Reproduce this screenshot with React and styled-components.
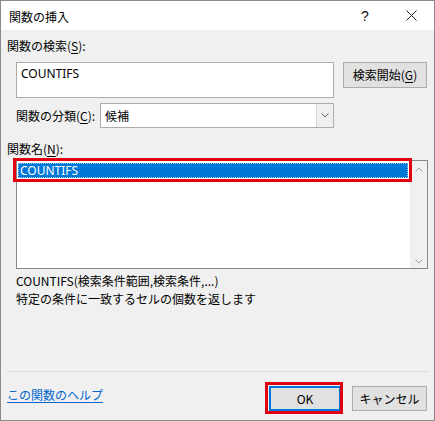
import React from "react";
import styled, { createGlobalStyle } from "styled-components";

const Global = createGlobalStyle`
  html, body { margin: 0; padding: 0; background: #fff; }
  * { box-sizing: border-box; }
  body { font-family: "Noto Sans CJK JP", "Noto Sans", sans-serif; font-size: 12px; color: #000; }
`;

const Window = styled.div`
  width: 435px;
  height: 421px;
  border: 1px solid #8a8a8a;
  background: #f0f0f0;
  display: flex;
  flex-direction: column;
  overflow: hidden;
`;

const TitleBar = styled.div`
  height: 29px;
  background: #fff;
  display: flex;
  align-items: center;
  padding-left: 8px;
  flex-shrink: 0;
`;

const Title = styled.div`
  flex: 1;
  font-size: 12px;
  line-height: 16px;
  padding-top: 2px;
`;

const TitleButton = styled.div`
  width: ${(p) => p.$w}px;
  height: 29px;
  display: flex;
  align-items: center;
  justify-content: center;
  font-family: "Liberation Sans", sans-serif;
  font-size: 14px;
  color: #111;
`;

const Body = styled.div`
  flex: 1;
  display: flex;
  flex-direction: column;
  padding: 0 6px;
`;

const Label = styled.div`
  line-height: 16px;
  margin-top: ${(p) => p.$mt || 0}px;
  margin-left: ${(p) => p.$ml || 0}px;
  width: ${(p) => (p.$w ? p.$w + "px" : "auto")};
  white-space: nowrap;
  flex-shrink: 0;
`;

const U = styled.span`
  text-decoration: underline;
  text-underline-offset: 2px;
`;

const SearchRow = styled.div`
  display: flex;
  align-items: flex-start;
  margin-top: 8px;
  padding-left: 9px;
`;

const TextArea = styled.div`
  width: 318px;
  height: 36px;
  background: #fff;
  border: 1px solid #adadad;
  padding: 3px 4px;
  line-height: 15px;
  font-family: "Noto Sans", "Noto Sans CJK JP", sans-serif;
`;

const Button = styled.div`
  width: ${(p) => p.$w}px;
  height: ${(p) => p.$h || 25}px;
  margin-left: ${(p) => p.$ml || 0}px;
  background: #e1e1e1;
  border: 1px solid ${(p) => (p.$default ? "#0078d7" : "#adadad")};
  box-shadow: ${(p) => (p.$default ? "inset 0 0 0 1px #0078d7" : "none")};
  display: flex;
  align-items: center;
  justify-content: center;
  white-space: nowrap;
  line-height: 16px;
  flex-shrink: 0;
`;

const CategoryRow = styled.div`
  display: flex;
  align-items: center;
  margin-top: 5px;
  padding-left: 9px;
`;

const Select = styled.div`
  width: 234px;
  height: 25px;
  background: #fff;
  border: 1px solid #adadad;
  display: flex;
  align-items: stretch;
`;

const SelectValue = styled.div`
  flex: 1;
  padding-left: 4px;
  display: flex;
  align-items: center;
`;

const SelectArrow = styled.div`
  width: 17px;
  border-left: 1px solid #d4d4d4;
  background: #f0f0f0;
  display: flex;
  align-items: center;
  justify-content: center;
`;

const ListWrap = styled.div`
  position: relative;
  margin-top: 3px;
  margin-left: 9px;
  width: 412px;
  height: 109px;
  background: #fff;
  border: 1px solid #828790;
  display: flex;
`;

const ListItems = styled.div`
  flex: 1;
  padding: 2px 0 0 1px;
`;

const ListItem = styled.div`
  height: 15px;
  width: 390px;
  background: #0078d7;
  color: #fff;
  outline: 1px dotted #9cc7ee;
  outline-offset: -1px;
  padding-left: 2px;
  line-height: 15px;
  font-family: "Noto Sans", "Noto Sans CJK JP", sans-serif;
`;

const Scrollbar = styled.div`
  width: 17px;
  background: #f0f0f0;
  display: flex;
  flex-direction: column;
  justify-content: space-between;
  align-items: center;
  padding: 6px 0 4px;
`;

const Highlight = styled.div`
  position: absolute;
  border: 3px solid #e0000f;
  pointer-events: none;
  left: ${(p) => p.$l}px;
  top: ${(p) => p.$t}px;
  width: ${(p) => p.$w}px;
  height: ${(p) => p.$h}px;
`;

const Description = styled.div`
  margin-top: 3px;
  margin-left: 9px;
  line-height: 18px;
`;

const Spacer = styled.div`
  flex: 1;
`;

const Separator = styled.div`
  height: 1px;
  background: #dcdcdc;
  margin: 0 0;
`;

const Footer = styled.div`
  height: 48px;
  display: flex;
  align-items: flex-start;
  padding: 14px 1px 0 0;
`;

const HelpLink = styled.a`
  color: #0066cc;
  text-decoration: underline;
  text-underline-offset: 2px;
  line-height: 16px;
  margin-top: 1px;
  flex: 1;
  cursor: pointer;
`;

const DefaultWrap = styled.div`
  position: relative;
`;

const Chevron = ({ up, color = "#a0a0a0" }) => (
  <svg width="8" height="5" viewBox="0 0 8 5">
    <path
      d={up ? "M0.5 4.5 L4 1 L7.5 4.5" : "M0.5 0.5 L4 4 L7.5 0.5"}
      fill="none"
      stroke={color}
      strokeWidth="1"
    />
  </svg>
);

export default function App() {
  return (
    <>
      <Global />
      <Window>
        <TitleBar>
          <Title>関数の挿入</Title>
          <TitleButton $w={46}>?</TitleButton>
          <TitleButton $w={46}>
            <svg width="11" height="11" viewBox="0 0 11 11">
              <path d="M0.5 0.5 L10.5 10.5 M10.5 0.5 L0.5 10.5" stroke="#222" strokeWidth="1" />
            </svg>
          </TitleButton>
        </TitleBar>
        <Body>
          <Label $mt={8}>
            関数の検索(<U>S</U>):
          </Label>
          <SearchRow>
            <TextArea>COUNTIFS</TextArea>
            <Button $w={84} $h={26} $ml={9}>
              検索開始(<U>G</U>)
            </Button>
          </SearchRow>
          <CategoryRow>
            <Label $w={84}>
              関数の分類(<U>C</U>):
            </Label>
            <Select>
              <SelectValue>候補</SelectValue>
              <SelectArrow>
                <Chevron color="#606060" />
              </SelectArrow>
            </Select>
          </CategoryRow>
          <Label $mt={13}>
            関数名(<U>N</U>):
          </Label>
          <ListWrap>
            <ListItems>
              <ListItem>COUNTIFS</ListItem>
            </ListItems>
            <Scrollbar>
              <Chevron up />
              <Chevron />
            </Scrollbar>
            <Highlight $l={-4} $t={-3} $w={399} $h={24} />
          </ListWrap>
          <Description>
            COUNTIFS(検索条件範囲,検索条件,...)
            <br />
            特定の条件に一致するセルの個数を返します
          </Description>
          <Spacer />
          <Separator />
          <Footer>
            <HelpLink>この関数のヘルプ</HelpLink>
            <DefaultWrap>
              <Button $w={72} $default>
                OK
              </Button>
              <Highlight $l={-4} $t={-4} $w={78} $h={32} />
            </DefaultWrap>
            <Button $w={75} $ml={11}>
              キャンセル
            </Button>
          </Footer>
        </Body>
      </Window>
    </>
  );
}
